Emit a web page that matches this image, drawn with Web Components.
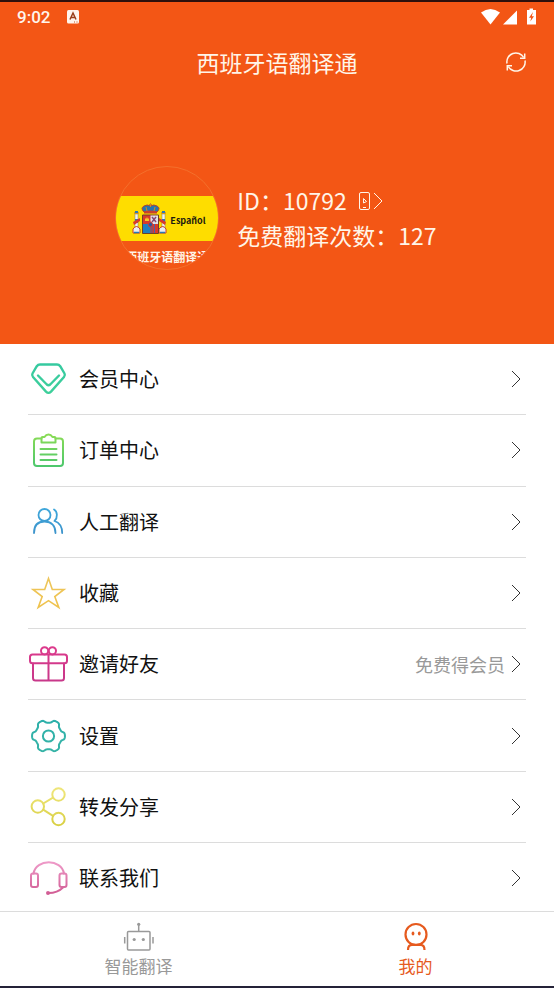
<!DOCTYPE html>
<html lang="zh-CN">
<head>
<meta charset="utf-8">
<meta name="viewport" content="width=device-width, initial-scale=1">
<title>西班牙语翻译通</title>
<style>
  body { margin: 0; background: #fff; font-family: "Noto Sans CJK SC", "Noto Sans", sans-serif; color: #111; }
</style>
</head>
<body>
<app-shell>
  <status-bar slot="header" time="9:02"></status-bar>
  <title-bar slot="header">西班牙语翻译通</title-bar>
  <user-profile slot="header" user-id="10792" credits="127"></user-profile>
  <menu-row icon="diamond">会员中心</menu-row>
  <menu-row icon="clipboard">订单中心</menu-row>
  <menu-row icon="people">人工翻译</menu-row>
  <menu-row icon="star">收藏</menu-row>
  <menu-row icon="gift">邀请好友<span slot="hint">免费得会员</span></menu-row>
  <menu-row icon="gear">设置</menu-row>
  <menu-row icon="share">转发分享</menu-row>
  <menu-row icon="headset">联系我们</menu-row>
  <nav-tab slot="nav" icon="robot">智能翻译</nav-tab>
  <nav-tab slot="nav" icon="face" active>我的</nav-tab>
</app-shell>

<script>
function gearPath(cx, cy) {
  let d = '';
  for (let i = 0; i < 120; i++) {
    const a = i * Math.PI / 60;
    const r = 14.9 + 1.6 * Math.tanh(2 * Math.cos(6 * a));
    d += (i ? 'L' : 'M') + (cx + r * Math.cos(a)).toFixed(2) + ' ' + (cy + r * Math.sin(a)).toFixed(2);
  }
  return d + 'Z';
}

const gradient = (from, to) =>
  `<defs><linearGradient id="g" gradientUnits="userSpaceOnUse" x1="0" y1="4" x2="0" y2="37"><stop offset="0" stop-color="${from}"/><stop offset="1" stop-color="${to}"/></linearGradient></defs>`;

const ICONS = {
  diamond: gradient('#35c9a0', '#3fd09a') + `<g stroke-width="2.4"><path d="M12 5.500H29Q31 5.500 32.200 7.200L36.500 14.500Q37.500 16.300 36 18L23 32.600Q20.500 35.200 18 32.600L5 18Q3.500 16.300 4.500 14.500L8.800 7.200Q10 5.500 12 5.500Z"/><path d="M10 16.500L18.800 25.500Q20.500 27 22.200 25.500L31 16.500"/></g>`,
  clipboard: gradient('#8bdc55', '#4cc76d') + `<g stroke-width="2"><path d="M13.500 8.500H9Q6 8.500 6 11.500V33Q6 36 9 36H32Q35 36 35 33V11.500Q35 8.500 32 8.500H27.500"/><path d="M13.500 12.500V8Q13.500 7 14.500 7H16.500Q18 4.500 20.500 4.500T24.500 7H26.500Q27.500 7 27.500 8V12.500Z"/><path d="M12.500 19H28.500M12.500 24.500H28.500M12.500 30H28.500"/></g>`,
  people: gradient('#3fa9dc', '#3c8fc8') + `<g stroke-width="1.800"><circle cx="16.500" cy="13" r="6"/><path d="M6 31C6 23.500 10 19.500 16.500 19.500S27.500 23.500 27.500 31"/><path d="M26 7.500C29.500 9.500 30 15.500 26.500 19C31 20.500 34.200 24.500 34.200 31"/></g>`,
  star: gradient('#edc65c', '#efc24c') + `<path stroke-width="1.600" stroke-linejoin="miter" d="M20.500 5.500L24.300 16.500H36L26.800 23.500L30.800 34.500L20.500 27.600L10.200 34.500L14.200 23.500L5 16.500H16.700Z"/>`,
  gift: gradient('#dc3a8c', '#c8388a') + `<g stroke-width="2"><rect x="2" y="10.500" width="37" height="8.800" rx="2.500"/><path d="M5 19.500V34Q5 36.500 7.500 36.500H33.500Q36 36.500 36 34V19.500M20.500 10.500V36.500"/><circle cx="16.600" cy="6.800" r="3.600"/><circle cx="24.400" cy="6.800" r="3.600"/></g>`,
  gear: gradient('#2db0aa', '#36b3a6') + `<g stroke-width="2"><path d="${gearPath(20.5, 20)}"/><circle cx="20.500" cy="20" r="5.600"/></g>`,
  share: gradient('#eee578', '#d9d044') + `<g stroke-width="2"><circle cx="30.500" cy="7.500" r="6.200"/><circle cx="9.800" cy="19.500" r="6.200"/><circle cx="30.500" cy="32" r="6.200"/><path d="M15.200 16.500L25 10.700M15.200 22.700L25 28.800"/></g>`,
  headset: gradient('#ee9ac8', '#d05a92') + `<g stroke-width="2"><rect x="3" y="15.500" width="7" height="13.500" rx="2"/><rect x="31.500" y="15.500" width="7" height="13.500" rx="2"/><path d="M5.500 15.500C8 0.500 33.500 0.500 36 15.500M35 29.500C32 32.500 27 35 20.500 35"/><circle cx="20" cy="35" r="1" fill="#d05a92"/></g>`
};

const CHEVRON = `<svg class="chevron" width="10" height="18" viewBox="0 0 10 18" fill="none" stroke="currentColor" aria-hidden="true"><path d="M1 1L9 9L1 17"/></svg>`;

class BaseElement extends HTMLElement {
  connectedCallback() {
    if (!this.shadowRoot) this.attachShadow({ mode: 'open' }).innerHTML = this.render();
  }
}

customElements.define('app-shell', class extends BaseElement {
  render() {
    return `<style>
      :host { display: flex; flex-direction: column; min-height: 100vh; box-sizing: border-box; border-top: 2px solid #2c100c; border-bottom: 2px solid #242238; }
      header { background: #f35615; color: #fff5e8; padding-bottom: 74px; }
      main { flex: 1; display: flex; flex-direction: column; padding: 0 28px; }
      nav { display: flex; border-top: 1px solid #dcdcdc; }
    </style>
    <header><slot name="header"></slot></header>
    <main><slot></slot></main>
    <nav><slot name="nav"></slot></nav>`;
  }
});

customElements.define('status-bar', class extends BaseElement {
  render() {
    return `<style>
      :host { display: flex; align-items: center; height: 30px; padding: 0 17px; font: 500 17px/30px Roboto, sans-serif; color: #fff5ec; }
      .note { margin-left: 17px; }
      .system { margin-left: auto; }
    </style>
    <span>${this.getAttribute('time')}</span>
    <svg class="note" width="13" height="14" viewBox="0 0 13 14" aria-hidden="true"><rect width="12" height="13.500" rx="1.500" fill="currentColor"/><path d="M3 9.500L6 3L9 9.500M4 7.500H8" fill="none" stroke="#9a3f1a" stroke-width="1.500"/><path d="M7 12H8M9.500 12H10.500" stroke="#c05020"/></svg>
    <svg class="system" width="56" height="18" viewBox="0 0 56 18" fill="#fff" aria-hidden="true">
      <path d="M0 4.500Q9.500 -2.500 19 4.500L9.500 16.500Z"/><path d="M36 2.500V16.500H22Z"/>
      <path d="M48.500 0.500H52V2H55V16.500H46V2H48.500Z"/><path d="M52 4L48 9.700H50.200L49.300 13.500L53 8.200H50.800Z" fill="#f35615"/>
    </svg>`;
  }
});

customElements.define('title-bar', class extends BaseElement {
  render() {
    return `<style>
      :host { display: grid; grid-template-columns: 24px 1fr 24px; align-items: center; height: 60px; padding: 0 26px; }
      h1 { margin: 0; text-align: center; font-size: 23px; font-weight: 400; line-height: 34px; }
      button { all: unset; display: flex; cursor: pointer; }
    </style>
    <span></span>
    <h1><slot></slot></h1>
    <button type="button" aria-label="刷新">
      <svg width="24" height="24" viewBox="0 0 24 24" fill="none" stroke="currentColor" stroke-width="1.500">
        <path d="M3 13.500A9 9 0 0 1 19.700 7.500M21 10.500A9 9 0 0 1 4.300 16.500"/><path d="M20.700 3.500V8.300H16M3.300 20.500V15.700H8"/>
      </svg>
    </button>`;
  }
});

customElements.define('user-avatar', class extends BaseElement {
  render() {
    return `<style>
      :host { display: flex; flex-direction: column; box-sizing: border-box; width: 104px; height: 104px; border: 1px solid #f4702c; border-radius: 50%; overflow: hidden; padding-top: 29px; }
      .flag { display: flex; align-items: center; gap: 3px; height: 45px; flex: none; padding-left: 16px; background: #fedd00; color: #1c1a10; font: 700 9px/12px "Noto Sans CJK SC", "Noto Sans", sans-serif; }
      .flag span { margin-top: 4px; }
      .name { align-self: center; white-space: nowrap; font-size: 12px; font-weight: 700; line-height: 16px; margin-top: 8px; }
      svg { flex: none; }
    </style>
    <div class="flag">
      <svg width="35" height="32" viewBox="0 0 35 32" aria-hidden="true">
        <path d="M3 11H6V26H3ZM30 11H33V26H30Z" fill="#f3f3ee" stroke="#777" stroke-width=".5"/>
        <path d="M2 10H7M29 10H34" stroke="#d28a20" stroke-width="1.500"/>
        <path d="M3 8H6V10H3ZM30 8H33V10H30Z" fill="#2878b8"/>
        <path d="M3 16H6V20H3ZM30 16H33V20H30Z" fill="#2878b8"/>
        <path d="M1 19L8 15V18L2 22ZM34 19L27 15V18L33 22Z" fill="#d9392b"/>
        <path d="M1 26Q4.500 21 8 26V30H1ZM27 26Q31 21 34 26V30H27Z" fill="#e9eef2" stroke="#c63b2a"/>
        <path d="M2 29.500H7M28 29.500H33" stroke="#2878b8" stroke-width="1.500"/>
        <path d="M10.500 12H26.500V30.500H10.500Z" fill="#d83a2b" stroke="#6b4228"/>
        <path d="M18.500 12.500H26V21H18.500Z" fill="#dfe2e8"/><path d="M20 14L24 19M24 14L20 19" stroke="#8a4870" stroke-width="1.500"/>
        <path d="M11 21H18.500V30H11Z" fill="#1f7fc0"/><path d="M20 21V30M22.500 21V30" stroke="#4b62a8"/>
        <path d="M13 18V15L14 16L15 14L16 16L17 15V18Z" fill="#f5c928"/>
        <ellipse cx="18.500" cy="21.500" rx="2" ry="2.500" fill="#2a559b" stroke="#d83a2b"/>
        <path d="M12 9Q8 5 12 3Q15 1 18.500 3Q22 1 25 3Q29 5 25 9Z" fill="#2875ae" stroke="#b3472a"/>
        <path d="M12 8.500Q18.500 6.500 25 8.500V10.500H12Z" fill="#c9412b"/>
        <path d="M18.500 0V4M17 1.500H20M14 4L15 8M23 4L22 8" stroke="#d28a20"/>
      </svg>
      <span>Español</span>
    </div>
    <div class="name">西班牙语翻译通</div>`;
  }
});

customElements.define('user-profile', class extends BaseElement {
  render() {
    return `<style>
      :host { display: flex; align-items: center; justify-content: center; gap: 18px; padding: 74px 2px 0 0; }
      p { margin: 0; font-size: 23px; line-height: 35px; display: flex; align-items: center; }
      button { all: unset; display: flex; align-items: center; gap: 3px; margin-left: 12px; cursor: pointer; }
    </style>
    <user-avatar></user-avatar>
    <div>
      <p>ID：${this.getAttribute('user-id')}
        <button type="button" aria-label="绑定手机">
          <svg width="11" height="18" viewBox="0 0 11 18" fill="none" stroke="currentColor"><rect x=".5" y=".5" width="10" height="17" rx="1.500"/><path d="M4 15.500H7M4.500 6.500V11L7.500 9.500Z"/></svg>
          ${CHEVRON}
        </button>
      </p>
      <p>免费翻译次数：${this.getAttribute('credits')}</p>
    </div>`;
  }
});

customElements.define('menu-row', class extends BaseElement {
  render() {
    return `<style>
      :host { display: flex; flex: 1 0 auto; min-height: 68px; box-sizing: border-box; border-bottom: 1px solid #dcdcdc; }
      :host(:last-of-type) { border-bottom: 0; }
      :host([icon="headset"]) { flex: none; padding-top: 2px; }
      button { all: unset; flex: 1; display: flex; align-items: center; cursor: pointer; font-size: 20px; line-height: 30px; }
      .label { flex: 1; margin-left: 11px; }
      .hint { font-size: 18px; color: #999; margin-right: 6px; }
      .chevron { margin-right: 5px; color: #333; }
    </style>
    <button type="button">
      <svg width="40" height="40" viewBox="0 0 40 40" fill="none" stroke="url(#g)" stroke-linejoin="round" stroke-linecap="round" aria-hidden="true">${ICONS[this.getAttribute('icon')]}</svg>
      <span class="label"><slot></slot></span>
      <span class="hint"><slot name="hint"></slot></span>
      ${CHEVRON}
    </button>`;
  }
});

const NAV_ICONS = {
  robot: `<g stroke-width="1.500"><rect x="5.500" y="11.500" width="22.500" height="18.500" rx="1"/><path d="M16.700 11V5M2.700 17V23.500M31 17V23.500"/></g><g fill="currentColor" stroke="none"><circle cx="16.700" cy="4.300" r="1.600"/><circle cx="12.200" cy="19.500" r="1.600"/><circle cx="21.300" cy="19.500" r="1.600"/></g>`,
  face: `<g stroke-width="2.200"><circle cx="17" cy="14.500" r="10.500"/><path d="M9 30Q9 24.800 13 24.800H21.500Q25.500 24.800 25.500 30"/></g><g fill="currentColor" stroke="none"><ellipse cx="14" cy="13.500" rx="1.400" ry="2"/><ellipse cx="20.300" cy="13.500" rx="1.400" ry="2"/></g>`
};

customElements.define('nav-tab', class extends BaseElement {
  render() {
    return `<style>
      :host { flex: 1; display: flex; color: #999; }
      :host([active]) { color: #e65a1e; }
      a { flex: 1; display: flex; flex-direction: column; align-items: center; padding: 8px 0 9px; color: inherit; text-decoration: none; font-size: 17px; line-height: 23px; }
      svg { display: block; }
    </style>
    <a href="#${this.getAttribute('icon')}">
      <svg width="34" height="34" viewBox="0 0 34 34" fill="none" stroke="currentColor" aria-hidden="true">${NAV_ICONS[this.getAttribute('icon')]}</svg>
      <slot></slot>
    </a>`;
  }
});
</script>
</body>
</html>
